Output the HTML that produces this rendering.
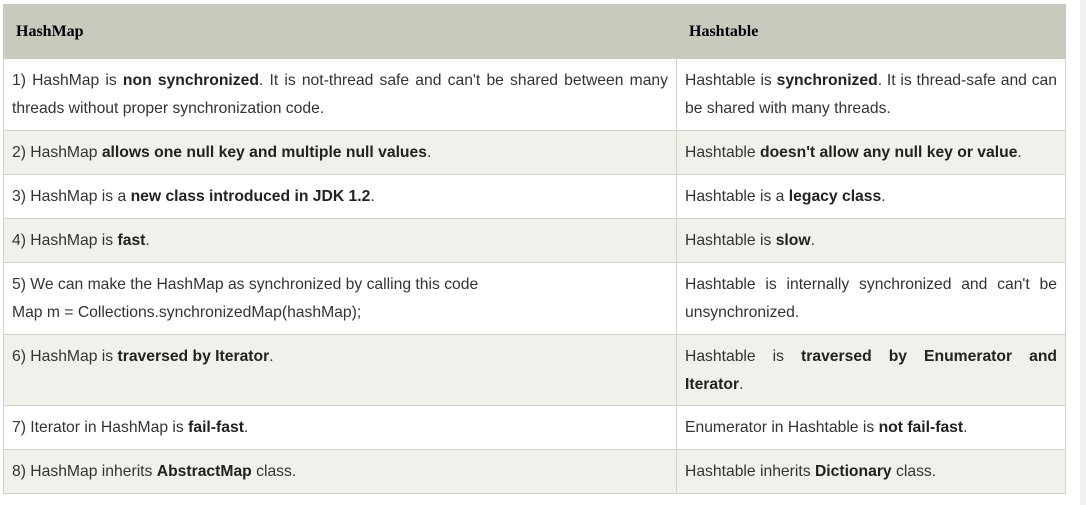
<!DOCTYPE html>
<html><head><style>
body{margin:0;background:#fff;width:1086px;height:505px;overflow:hidden;position:relative;font-family:"Liberation Sans",sans-serif;}
.sb{position:absolute;left:1080px;top:0;width:6px;height:505px;background:#f1f1f1}
table{position:absolute;left:3px;top:4px;border-collapse:collapse;width:1062px;table-layout:fixed}
td{border:1px solid #d0d3ca;padding:8px 8px 0;font-size:15.7px;line-height:28px;color:#333;text-align:justify;vertical-align:top;box-sizing:border-box}
th{background:#c7cabd;font-family:"Liberation Serif",serif;font-size:16px;color:#000;text-align:left;height:53px;border:1px solid #c7cabd;padding:0 8px 0 12px;vertical-align:middle}
tr.e td{background:#eff1ea}
b{color:#222}
.j{display:block;text-align:justify;text-align-last:justify}
</style></head><body>
<div class="sb"></div>
<table>
<colgroup><col style="width:673px"><col style="width:389px"></colgroup>
<tr><th>HashMap</th><th>Hashtable</th></tr>
<tr style="height:72px"><td>1) HashMap is <b>non synchronized</b>. It is not-thread safe and can't be shared between many threads without proper synchronization code.</td><td>Hashtable is <b>synchronized</b>. It is thread-safe and can be shared with many threads.</td></tr>
<tr class="e" style="height:44px"><td>2) HashMap <b>allows one null key and multiple null values</b>.</td><td>Hashtable <b>doesn't allow any null key or value</b>.</td></tr>
<tr style="height:44px"><td>3) HashMap is a <b>new class introduced in JDK 1.2</b>.</td><td>Hashtable is a <b>legacy class</b>.</td></tr>
<tr class="e" style="height:44px"><td>4) HashMap is <b>fast</b>.</td><td>Hashtable is <b>slow</b>.</td></tr>
<tr style="height:72px"><td style="text-align:left">5) We can make the HashMap as synchronized by calling this code<br>Map m = Collections.synchronizedMap(hashMap);</td><td>Hashtable is internally synchronized and can't be unsynchronized.</td></tr>
<tr class="e" style="height:71px"><td>6) HashMap is <b>traversed by Iterator</b>.</td><td><span class="j">Hashtable is <b>traversed by Enumerator and</b></span><b>Iterator</b>.</td></tr>
<tr style="height:44px"><td>7) Iterator in HashMap is <b>fail-fast</b>.</td><td>Enumerator in Hashtable is <b>not fail-fast</b>.</td></tr>
<tr class="e" style="height:44px"><td>8) HashMap inherits <b>AbstractMap</b> class.</td><td>Hashtable inherits <b>Dictionary</b> class.</td></tr>
</table>
</body></html>
